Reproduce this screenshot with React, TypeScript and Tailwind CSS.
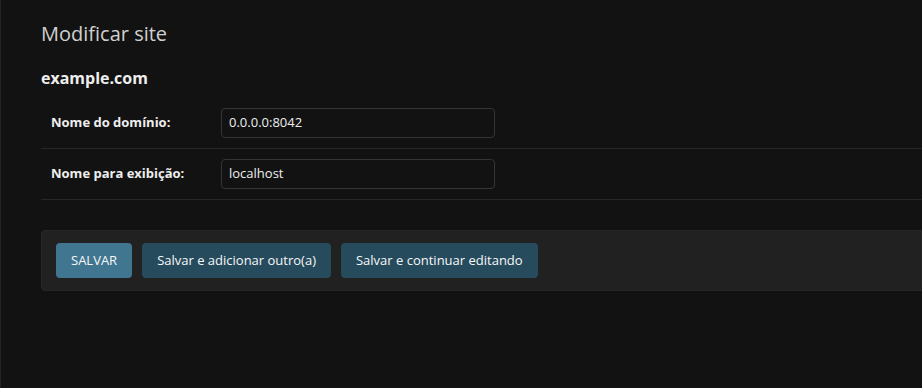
export default function App() {
  const font = { fontFamily: '"Open Sans", "Noto Sans", sans-serif' };
  return (
    <div
      className="flex h-[388px] w-[922px] overflow-hidden border-l border-[#232323] bg-[#121212] text-[#eeeeee]"
      style={font}
    >
      <div className="flex-1 pl-10 pt-[22px] min-w-[1000px]">
        {/* Title */}
        <h1 className="text-[20px] font-normal leading-6 text-[#d0d0d0]">Modificar site</h1>
        <h2 className="mt-[22px] text-[16px] font-bold leading-5 text-[#eeeeee]">example.com</h2>

        {/* Fields */}
        <div className="mt-[10px]">
          <FieldRow label="Nome do domínio:" value="0.0.0.0:8042" />
          <FieldRow label="Nome para exibição:" value="localhost" />
        </div>

        {/* Submit row */}
        <div className="mt-[30px] flex gap-[10px] rounded-[4px] border border-[#262626] bg-[#212121] px-[14px] py-[12px]">
          <button className="rounded-[4px] bg-[#417690] px-[15px] py-[10px] text-[13px] leading-[15px] text-[#f7f7f7]">
            SALVAR
          </button>
          <button className="rounded-[4px] bg-[#264b5d] px-[15px] py-[10px] text-[13px] leading-[15px] text-[#f7f7f7]">
            Salvar e adicionar outro(a)
          </button>
          <button className="rounded-[4px] bg-[#264b5d] px-[15px] py-[10px] text-[13px] leading-[15px] text-[#f7f7f7]">
            Salvar e continuar editando
          </button>
        </div>
      </div>
    </div>
  );
}

function FieldRow({ label, value }: { label: string; value: string }) {
  return (
    <div className="flex items-center border-b border-[#272727] p-[10px]">
      <label className="w-[160px] shrink-0 pr-[10px] text-[13px] font-bold text-[#eeeeee]">{label}</label>
      <div className="ml-[10px] flex h-[30px] w-[274px] items-center rounded-[4px] border border-[#353535] bg-[#121212] px-[7px] text-[13px] text-[#eeeeee]">
        {value}
      </div>
    </div>
  );
}
